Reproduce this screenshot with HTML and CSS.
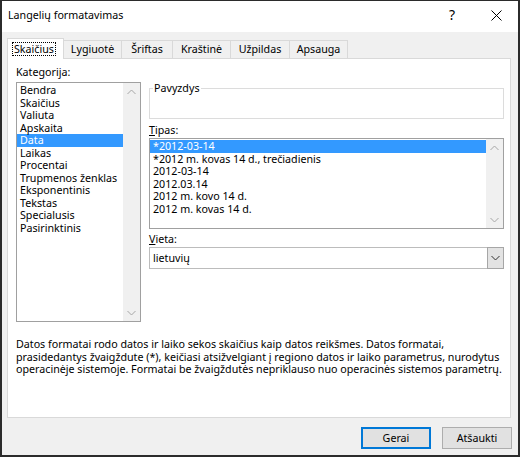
FILE: index.html
```html
<!DOCTYPE html>
<html lang="lt">
<head>
  <meta charset="UTF-8">
  <title>Langelių formatavimas</title>
  <link rel="stylesheet" href="styles.css">
</head>
<body>

  <div class="window">
    <div class="titlebar">
      <div class="title">Langelių formatavimas</div>
      <div class="help">?</div>
      <div class="close">
        <svg width="11" height="11" viewBox="0 0 11 11"><path d="M0.5 0.5 L10.5 10.5 M10.5 0.5 L0.5 10.5" stroke="#000" stroke-width="1" fill="none"/></svg>
      </div>
    </div>

    <div class="content">
      <div class="tabs">
        <div class="tab active"><span class="focus">Skaičius</span></div>
        <div class="tab">Lygiuotė</div>
        <div class="tab">Šriftas</div>
        <div class="tab">Kraštinė</div>
        <div class="tab">Užpildas</div>
        <div class="tab">Apsauga</div>
      </div>

      <div class="panel">
        <div class="columns">
          <div class="col-left">
            <div class="label">Kate<u>g</u>orija:</div>
            <div class="listbox cat-list">
              <ul class="items">
                <li>Bendra</li>
                <li>Skaičius</li>
                <li>Valiuta</li>
                <li>Apskaita</li>
                <li class="selected">Data</li>
                <li>Laikas</li>
                <li>Procentai</li>
                <li>Trupmenos ženklas</li>
                <li>Eksponentinis</li>
                <li>Tekstas</li>
                <li>Specialusis</li>
                <li>Pasirinktinis</li>
              </ul>
              <div class="scrollbar">
                <div class="arrow"><svg width="9" height="6" viewBox="0 0 9 6"><polyline points="0.5,5 4.5,1 8.5,5" fill="none" stroke="#a6a6a6"/></svg></div>
                <div class="arrow"><svg width="9" height="6" viewBox="0 0 9 6"><polyline points="0.5,1 4.5,5 8.5,1" fill="none" stroke="#a6a6a6"/></svg></div>
              </div>
            </div>
          </div>

          <div class="col-right">
            <fieldset class="sample">
              <legend>Pavyzdys</legend>
            </fieldset>

            <div class="label label-gap"><u>T</u>ipas:</div>
            <div class="listbox type-list">
              <ul class="items">
                <li class="selected">*2012-03-14</li>
                <li>*2012 m. kovas 14 d., trečiadienis</li>
                <li>2012-03-14</li>
                <li>2012.03.14</li>
                <li>2012 m. kovo 14 d.</li>
                <li>2012 m. kovas 14 d.</li>
              </ul>
              <div class="scrollbar">
                <div class="arrow"><svg width="9" height="6" viewBox="0 0 9 6"><polyline points="0.5,5 4.5,1 8.5,5" fill="none" stroke="#a6a6a6"/></svg></div>
                <div class="arrow"><svg width="9" height="6" viewBox="0 0 9 6"><polyline points="0.5,1 4.5,5 8.5,1" fill="none" stroke="#a6a6a6"/></svg></div>
              </div>
            </div>

            <div class="label label-gap-small"><u>V</u>ieta:</div>
            <div class="select">
              <div class="select-value">lietuvių</div>
              <div class="select-button">
                <svg width="9" height="6" viewBox="0 0 9 6"><polyline points="0.5,1 4.5,5 8.5,1" fill="none" stroke="#333"/></svg>
              </div>
            </div>
          </div>
        </div>

        <p class="desc">Datos formatai rodo datos ir laiko sekos skaičius kaip datos reikšmes. Datos formatai,<br>prasidedantys žvaigždute (*), keičiasi atsižvelgiant į regiono datos ir laiko parametrus, nurodytus<br>operacinėje sistemoje. Formatai be žvaigždutės nepriklauso nuo operacinės sistemos parametrų.</p>
      </div>

      <div class="buttons">
        <button class="btn primary">Gerai</button>
        <button class="btn">Atšaukti</button>
      </div>
    </div>
  </div>

</body>
</html>
```

FILE: styles.css
```css
* {
  box-sizing: border-box;
}

body {
  margin: 0;
  font-family: "Noto Sans", "Open Sans", sans-serif;
  font-size: 10.7px;
  color: #000;
}

.window {
  width: 520px;
  height: 457px;
  border: 2px solid #2b2b2b;
  border-top-width: 1px;
  background-color: #f0f0f0;
  display: flex;
  flex-direction: column;
}

/* title bar */
.titlebar {
  height: 31px;
  background-color: #fff;
  display: flex;
  align-items: flex-start;
}

.title {
  flex: 1;
  padding-left: 6px;
  line-height: 28px;
}

.help {
  width: 44px;
  text-align: center;
  font-size: 14px;
  line-height: 28px;
}

.close {
  width: 44px;
  height: 28px;
  display: flex;
  align-items: center;
  justify-content: center;
}

.content {
  flex: 1;
  padding: 6px 7px 0 5px;
  display: flex;
  flex-direction: column;
}

/* tabs */
.tabs {
  display: flex;
  align-items: flex-end;
  height: 20px;
  position: relative;
  z-index: 1;
}

.tab {
  height: 18px;
  margin-left: -1px;
  border: 1px solid #d9d9d9;
  border-bottom: none;
  line-height: 17px;
  text-align: center;
  white-space: nowrap;
}

.tab:nth-child(2) {
  width: 58px;
  margin-left: 0;
  border-left: none;
}

.tab:nth-child(3) {
  width: 52px;
}

.tab:nth-child(4) {
  width: 59px;
}

.tab:nth-child(5) {
  width: 60px;
}

.tab:nth-child(6) {
  width: 59px;
}

.tab.active {
  width: 57px;
  height: 21px;
  margin-left: 0;
  margin-bottom: -1px;
  padding: 2px 0 0 4px;
  text-align: left;
  background-color: #fff;
}

.focus {
  display: inline-block;
  border: 1px dotted #000;
  padding: 0 1px;
  line-height: 12px;
}

/* panel */
.panel {
  height: 360px;
  background-color: #fff;
  border: 1px solid #d9d9d9;
  padding: 7px 6px 0 8px;
}

.columns {
  display: flex;
  gap: 8px;
}

.col-left {
  width: 125px;
}

.col-right {
  width: 355px;
}

.label {
  line-height: 13px;
  height: 13px;
  margin-bottom: 3px;
}

.label-gap {
  margin-top: 5px;
  margin-bottom: 1px;
}

.label-gap-small {
  margin-top: 4px;
  margin-bottom: 1px;
}

.listbox {
  display: flex;
  border: 1px solid #a0a0a0;
  background-color: #fff;
}

.cat-list {
  height: 240px;
}

.type-list {
  height: 91px;
}

.items {
  flex: 1;
  list-style: none;
  margin: 0;
  padding: 1px 0 0 0;
}

.items li {
  height: 12.5px;
  line-height: 12.5px;
  padding-left: 3px;
  white-space: nowrap;
}

.items li.selected {
  background-color: #3399ff;
  color: #fff;
}

.scrollbar {
  width: 17px;
  background-color: #f0f0f0;
  display: flex;
  flex-direction: column;
  justify-content: space-between;
}

.arrow {
  height: 17px;
  display: flex;
  align-items: center;
  justify-content: center;
}

.sample {
  margin: 16px 0 0 0;
  padding: 0;
  height: 37px;
  border: 1px solid #dcdcdc;
}

.sample legend {
  margin-left: 3px;
  padding: 0 1px;
  line-height: 13px;
}

.select {
  display: flex;
  height: 22px;
  border: 1px solid #bcbcbc;
  background-color: #fff;
}

.select-value {
  flex: 1;
  padding-left: 3px;
  line-height: 20px;
}

.select-button {
  width: 17px;
  margin: -1px -1px -1px 0;
  border: 1px solid #a6a6a6;
  background-color: #e3e3e3;
  display: flex;
  align-items: center;
  justify-content: center;
}

.desc {
  margin: 16px 0 0 0;
  line-height: 12.5px;
  white-space: nowrap;
}

/* buttons */
.buttons {
  display: flex;
  justify-content: flex-end;
  gap: 11px;
  margin-top: 9px;
  margin-right: -1px;
}

.btn {
  width: 70px;
  height: 22px;
  padding: 0;
  border: 1px solid #adadad;
  background-color: #e1e1e1;
  font-family: inherit;
  font-size: 10.7px;
  color: #000;
}

.btn.primary {
  border: 2px solid #0078d7;
}
```
